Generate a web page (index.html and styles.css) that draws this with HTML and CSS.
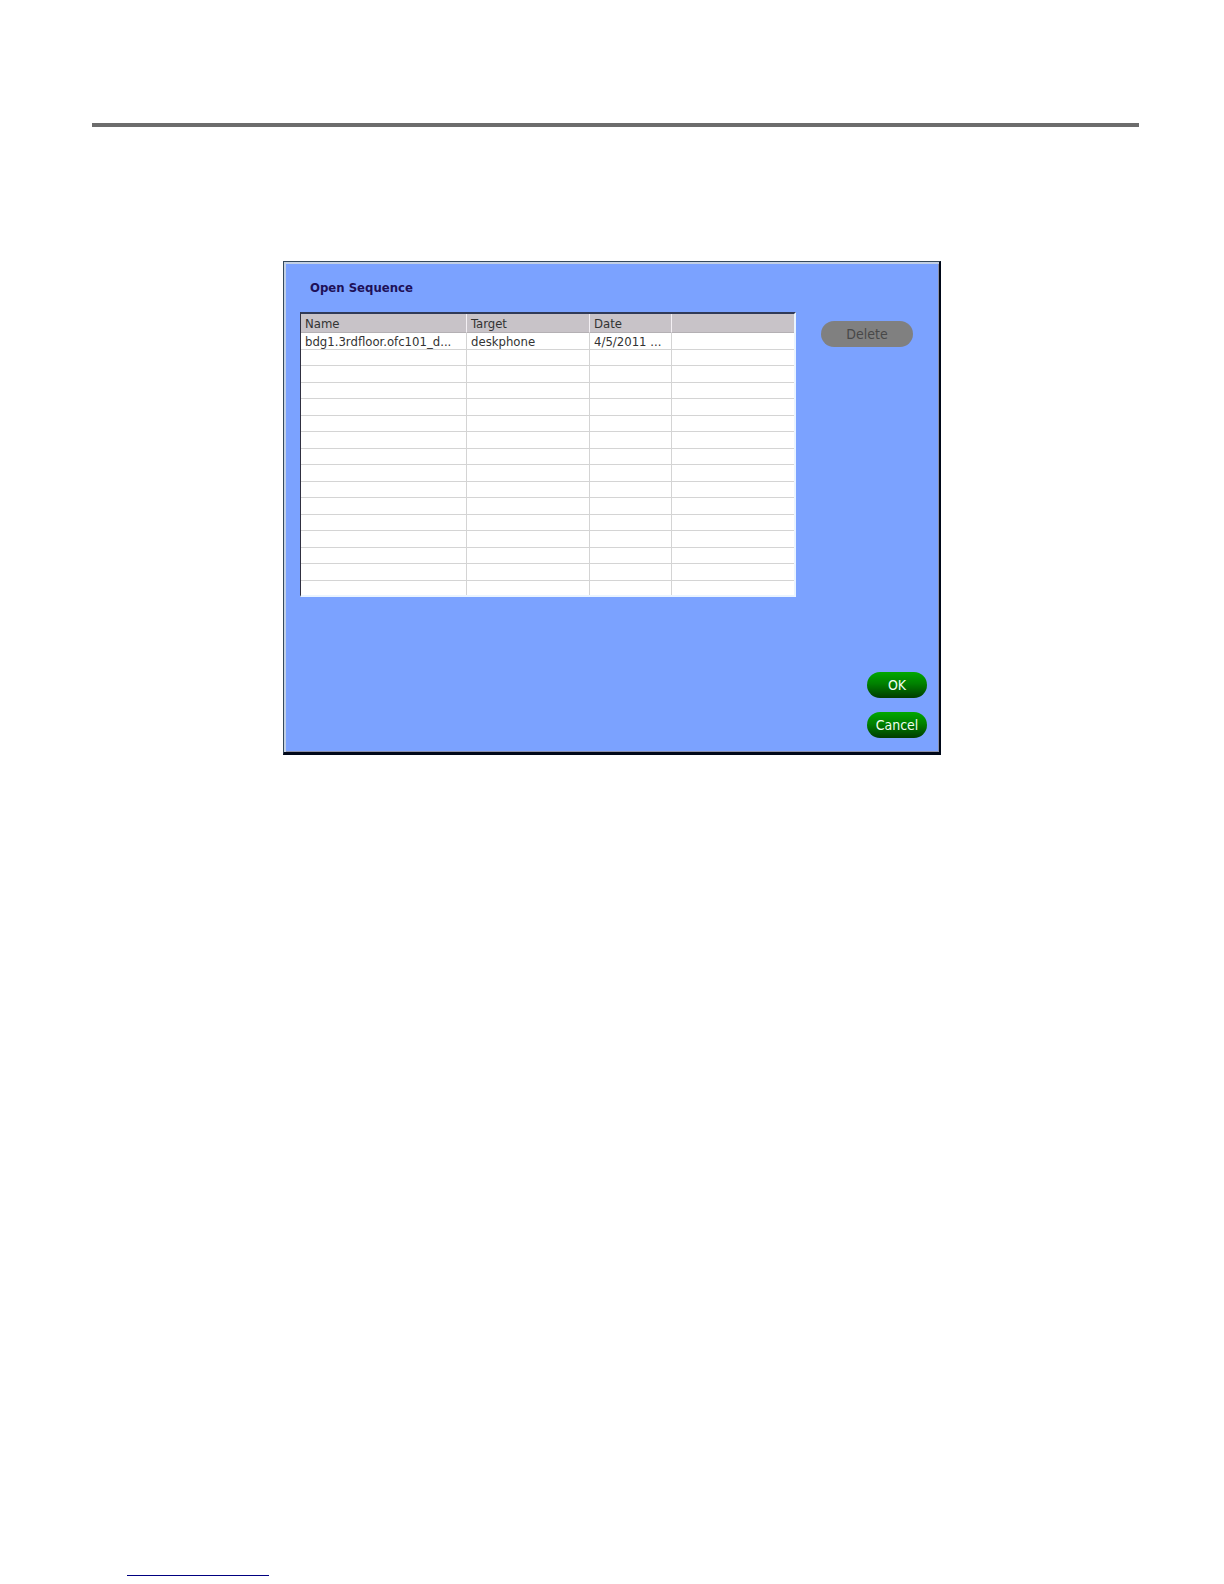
FILE: index.html
```html
<!DOCTYPE html>
<html lang="en">

<head>
    <meta charset="UTF-8">
    <title>Open Sequence</title>
    <link rel="stylesheet" href="styles.css">
</head>

<body>
    <hr class="top-rule">

    <main class="dialog">
        <h1 class="dialog-title">Open Sequence</h1>
        <div class="dialog-body">
            <div class="list">
                <table class="sequences">
                    <colgroup>
                        <col class="col-name">
                        <col class="col-target">
                        <col class="col-date">
                        <col>
                    </colgroup>
                    <thead>
                        <tr>
                            <th>Name</th>
                            <th>Target</th>
                            <th>Date</th>
                            <th></th>
                        </tr>
                    </thead>
                    <tbody>
                        <tr>
                            <td>bdg1.3rdfloor.ofc101_d...</td>
                            <td>deskphone</td>
                            <td>4/5/2011 ...</td>
                            <td></td>
                        </tr>
                    </tbody>
                </table>
            </div>
            <button type="button" class="btn-delete" disabled>Delete</button>
        </div>
        <div class="actions">
            <button type="button" class="btn">OK</button>
            <button type="button" class="btn">Cancel</button>
        </div>
    </main>

    <hr class="bottom-rule">

    <script>
        // fill the rest of the list with empty rows
        const tbody = document.querySelector('.sequences tbody')
        for (let i = 0; i < 15; i++) {
            const tr = document.createElement('tr')
            for (let j = 0; j < 4; j++) {
                tr.appendChild(document.createElement('td'))
            }
            tbody.appendChild(tr)
        }
    </script>
</body>

</html>
```

FILE: styles.css
```css
* {
    box-sizing: border-box;
}

body {
    display: flex;
    flex-direction: column;
    min-height: 100vh;
    margin: 0;
    padding: 123px 0 8px;
    background: white;
    font-family: "DejaVu Sans Condensed", "DejaVu Sans", sans-serif;
    font-size: 13px;
}

.top-rule {
    align-self: stretch;
    height: 4px;
    margin: 0 85px 134px 92px;
    border: 0;
    background: #6c6c6c;
}

.dialog {
    width: 100%;
    max-width: 658px;
    margin: 0 auto;
    padding: 17px 12px 14px 16px;
    border: 1px solid #34495c;
    border-right: 2px solid #000818;
    border-bottom: 3px solid #000818;
    background: #7ba2ff;
    box-shadow: inset 2px 2px #c3d0e4, inset -1px -1px #8a8fa8;
}

.dialog-title {
    margin: 0 0 15px 10px;
    font-size: 13px;
    line-height: 18px;
    color: #1e1058;
}

.dialog-body {
    display: flex;
    align-items: flex-start;
    gap: 25px;
}

.list {
    flex: 1;
    height: 285px;
    overflow: hidden;
    border: 2px solid #eaf4ff;
    border-top-color: #303a58;
    border-left: 1px solid #303040;
    background: white;
}

.sequences {
    width: 100%;
    table-layout: fixed;
    border-collapse: separate;
    border-spacing: 0;
    color: #333;
}

.col-name {
    width: 166px;
}

.col-target {
    width: 123px;
}

.col-date {
    width: 82px;
}

.sequences th,
.sequences td {
    padding: 0 0 0 4px;
    overflow: hidden;
    white-space: nowrap;
    text-align: left;
    font-weight: normal;
    line-height: 16px;
}

.sequences th {
    height: 19px;
    padding-top: 2px;
    border-right: 1px solid #f4f0f4;
    border-bottom: 1px solid #b4b0b4;
    background: #c8c3c8;
}

.sequences td {
    height: 16px;
    border-right: 1px solid #d4d4d4;
    border-bottom: 1px solid #d4d4d4;
    line-height: 15px;
}

.sequences tr:nth-child(odd) td {
    height: 17px;
}

.sequences th:last-child,
.sequences td:last-child {
    border-right: 0;
}

button {
    padding: 0;
    border: 0;
    border-radius: 13px;
    font: inherit;
    font-size: 14px;
}

.btn-delete {
    width: 92px;
    height: 26px;
    margin: 9px 14px 0 0;
    background: #808080;
    color: #484848;
}

.actions {
    display: flex;
    flex-direction: column;
    align-items: flex-end;
    gap: 14px;
    margin-top: 75px;
}

.btn {
    width: 60px;
    height: 26px;
    background: linear-gradient(#00a800, #008000 45%, #003c00);
    color: #f0fff0;
}

.bottom-rule {
    width: 142px;
    height: 1px;
    margin: auto 0 0 127px;
    border: 0;
    background: #000080;
}
```
